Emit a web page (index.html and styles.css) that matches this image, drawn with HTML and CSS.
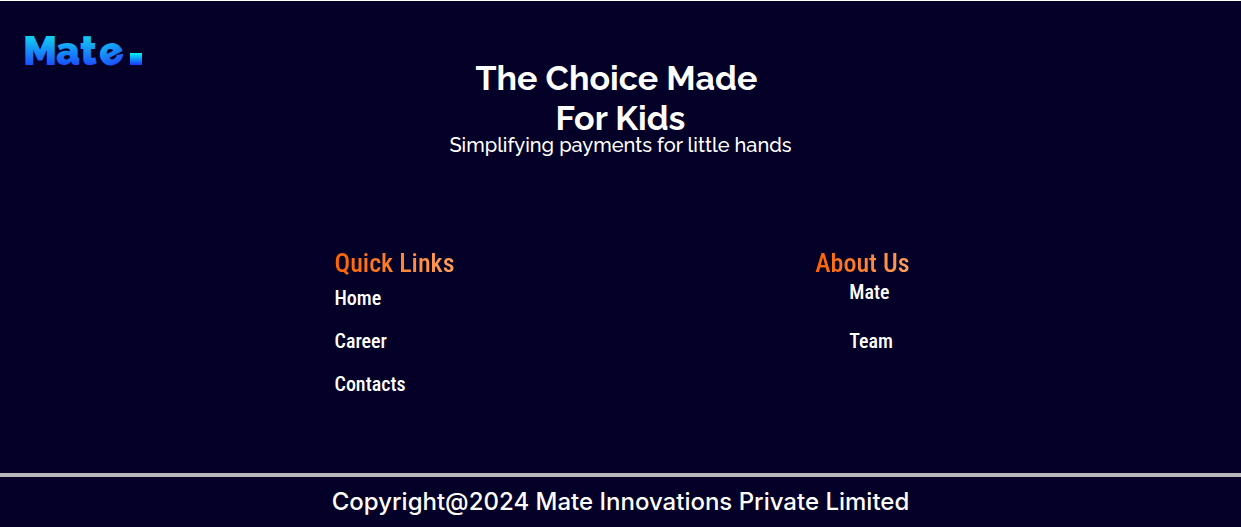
FILE: index.html
```html
<!DOCTYPE html>
<html lang="en">
<head>
<meta charset="utf-8">
<meta name="viewport" content="width=device-width, initial-scale=1">
<title>Mate</title>
<link rel="stylesheet" href="styles.css">
</head>
<body>
<footer class="footer">
  <div class="top">
    <a class="logo" href="#" aria-label="Mate">
      <svg width="128" height="56" viewBox="-4 -10 128 56" aria-hidden="true">
        <defs>
          <linearGradient id="letters" gradientUnits="userSpaceOnUse" x1="0" y1="2" x2="0" y2="31">
            <stop offset="0" stop-color="#12d0f0"/>
            <stop offset="1" stop-color="#1a50ff"/>
          </linearGradient>
          <linearGradient id="dot" x1="0" y1="0" x2="0" y2="1">
            <stop offset="0" stop-color="#05f5f5"/>
            <stop offset="1" stop-color="#1a35ff"/>
          </linearGradient>
        </defs>
        <g class="logo-letters" fill="url(#letters)">
          <text x="-1" y="31">M</text>
          <text x="32" y="31">a</text>
          <text x="56" y="31">t</text>
          <text x="75" y="31" transform="rotate(-28 87 20)">e</text>
        </g>
        <rect x="106" y="19" width="12" height="12" fill="url(#dot)"/>
      </svg>
    </a>
    <div class="hero">
      <h1 class="title">The Choice Made&nbsp;<br>For Kids</h1>
      <p class="tagline">Simplifying payments for little hands</p>
    </div>
  </div>
  <nav class="columns" aria-label="Footer">
    <section>
      <h2 class="heading">Quick Links</h2>
      <ul class="links">
        <li><a href="#">Home</a></li>
        <li><a href="#">Career</a></li>
        <li><a href="#">Contacts</a></li>
      </ul>
    </section>
    <section>
      <h2 class="heading heading-about">About Us</h2>
      <ul class="links links-about">
        <li><a href="#">Mate</a></li>
        <li><a href="#">Team</a></li>
      </ul>
    </section>
  </nav>
  <p class="copyright">Copyright@2024 Mate Innovations Private Limited</p>
</footer>
</body>
</html>
```
FILE: styles.css
```css
* { box-sizing: border-box; }
body { margin: 0; background: #040027; }
h1, h2, p, ul { margin: 0; padding: 0; }
ul { list-style: none; }
a { color: inherit; text-decoration: none; }

.footer {
  border-top: 1px solid #fff;
  color: #fff;
  background: #040027;
}
.top {
  display: grid;
  grid-template-columns: 1fr auto 1fr;
  align-items: start;
  padding: 23px 20px 0;
}
.logo svg { display: block; }
.logo-letters {
  font-family: Raleway, Lato, sans-serif;
  font-size: 40px;
  font-weight: 900;
}
.hero { padding-top: 34px; text-align: center; }
.title {
  font: 700 34px/40px Raleway, Lato, sans-serif;
}
.tagline {
  font: 500 20px/14px Raleway, Lato, sans-serif;
}
.columns {
  display: flex;
  justify-content: space-between;
  width: 578px;
  max-width: 100%;
  margin: 0 auto;
  padding: 93px 0 0 3px;
}
.heading {
  font: 500 26px/36px "Roboto Condensed", Roboto, sans-serif;
  color: transparent;
  background: linear-gradient(90deg, #ff6200, #ffa05f);
  background-clip: text;
  -webkit-background-clip: text;
}
.links {
  display: grid;
  gap: 19px;
  padding-top: 5px;
  font: 500 20px/24px "Roboto Condensed", Roboto, sans-serif;
}
.links-about {
  gap: 27px;
  padding: 0 0 0 34px;
  line-height: 22px;
}
.copyright {
  margin-top: 77px;
  border-top: 4px solid #b7b7b7;
  padding: 9px 16px 5px;
  font: 500 24px/32px Inter, sans-serif;
  text-align: center;
}
```
